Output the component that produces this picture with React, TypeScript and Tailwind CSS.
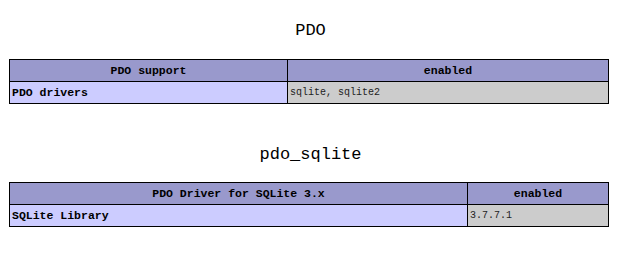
const mono = { fontFamily: '"Liberation Mono", "DejaVu Sans Mono", monospace' };

type Row = { label: string; value: string };

interface ModuleProps {
  title: string;
  head: [string, string];
  rows: Row[];
  firstCol: number;
  gap: string;
}

const ModuleTable = ({ title, head, rows, firstCol, gap }: ModuleProps) => {
  return (
    <section className="flex flex-col">
      <h2 className="h-[24px] text-center text-[17px] leading-[24px] text-black font-[family-name:'Liberation_Mono',monospace]">
        {title}
      </h2>
      <table className={`${gap} ml-[9px] w-[600px] border-collapse border border-black text-black`}>
        <colgroup>
          <col style={{ width: firstCol }} />
          <col />
        </colgroup>
        <thead>
          <tr className="h-[22px] bg-[#9999cc]">
            {head.map((h) => (
              <th
                key={h}
                className="border border-black px-[3px] py-0 text-center text-[11.5px] font-bold leading-[14px] font-[family-name:'Liberation_Mono',monospace]"
              >
                {h}
              </th>
            ))}
          </tr>
        </thead>
        <tbody>
          {rows.map((r) => (
            <tr key={r.label} className="h-[22px]">
              <td className="border border-black bg-[#ccccff] px-[2px] py-0 text-left text-[11.5px] font-bold leading-[14px] font-[family-name:'Liberation_Mono',monospace]">
                {r.label}
              </td>
              <td className="border border-black bg-[#cccccc] px-[2px] py-0 text-left text-[10px] leading-[14px] text-[#222] font-[family-name:'Liberation_Mono',monospace]">
                {r.value}
              </td>
            </tr>
          ))}
        </tbody>
      </table>
    </section>
  );
};

export default function App() {
  return (
    <div className="w-[621px] h-[255px] bg-white overflow-hidden" style={mono}>
      <div className="pt-[19px]">
        <ModuleTable
          title="PDO"
          head={['PDO support', 'enabled']}
          rows={[{ label: 'PDO drivers', value: 'sqlite, sqlite2' }]}
          firstCol={278}
          gap="mt-[16px]"
        />
      </div>
      <div className="pt-[39px]">
        <ModuleTable
          title="pdo_sqlite"
          head={['PDO Driver for SQLite 3.x', 'enabled']}
          rows={[{ label: 'SQLite Library', value: '3.7.7.1' }]}
          firstCol={458}
          gap="mt-[15px]"
        />
      </div>
    </div>
  );
}
